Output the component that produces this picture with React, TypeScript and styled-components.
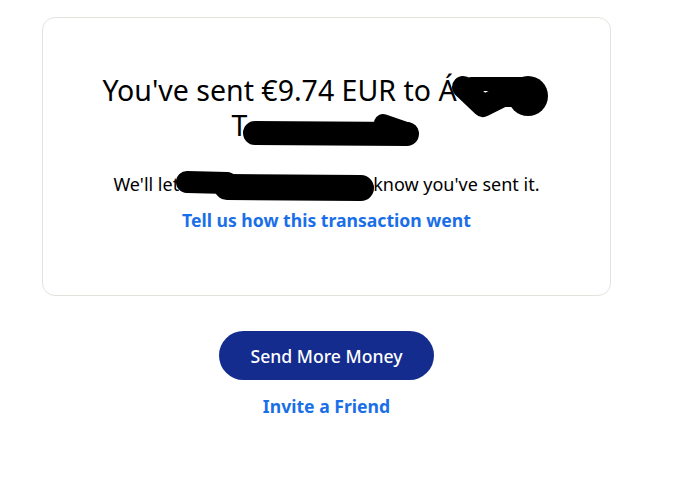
import styled, { createGlobalStyle } from "styled-components";

const GlobalStyle = createGlobalStyle`
    body {
        margin: 0;
        background: #ffffff;
        font-family: "Noto Sans", "Open Sans", sans-serif;
        color: #000000;
    }
`;

function App(){
    return(
        <>
            <GlobalStyle/>
            <Page>
                <Card>
                    <Title>
                        <span>You've sent €9.74 EUR to Á</span>
                        <Scribble width={100} height={42} $shift={4} $before={-6} $after={0}>
                            <path d="M12 11 L32 30 L52 20 L78 20" stroke="#000" strokeWidth="22" strokeLinecap="round" strokeLinejoin="round" fill="none"/>
                            <circle cx="77" cy="20" r="20" fill="#000"/>
                            <path d="M20 8 L70 8" stroke="#000" strokeWidth="14" strokeLinecap="round"/>
                        </Scribble>
                        <br/>
                        <span>T</span>
                        <Scribble width={178} height={36} $shift={2} $before={-4} $after={0}>
                            <path d="M12 21 L164 22" stroke="#000" strokeWidth="24" strokeLinecap="round" fill="none"/>
                            <path d="M140 11 L166 20" stroke="#000" strokeWidth="18" strokeLinecap="round" fill="none"/>
                        </Scribble>
                    </Title>
                    <Message>
                        <span>We'll let</span>
                        <Scribble width={200} height={32} $shift={0} $before={-4} $after={-2}>
                            <path d="M12 12 L52 13" stroke="#000" strokeWidth="22" strokeLinecap="round" fill="none"/>
                            <path d="M52 17 L186 18" stroke="#000" strokeWidth="26" strokeLinecap="round" fill="none"/>
                        </Scribble>
                        <span>know you've sent it.</span>
                    </Message>
                    <TextLink>Tell us how this transaction went</TextLink>
                </Card>
                <Actions>
                    <PrimaryButton>Send More Money</PrimaryButton>
                    <TextLink>Invite a Friend</TextLink>
                </Actions>
            </Page>
        </>
    );
}

export default App;

const Page = styled.div`
    display: flex;
    flex-direction: column;
    width: 569px;
    padding: 17px 0 0 42px;
`;

const Card = styled.div`
    display: flex;
    flex-direction: column;
    align-items: center;
    height: 279px;
    box-sizing: border-box;
    border: 1px solid #e3e3de;
    border-radius: 13px;
    padding-top: 55px;
`;

const Title = styled.h1`
    margin: 0;
    font-size: 28.5px;
    font-weight: 400;
    line-height: 35px;
    text-align: center;
    white-space: nowrap;
`;

const Scribble = styled.svg<{ $shift: number; $before: number; $after: number }>`
    display: inline-block;
    vertical-align: middle;
    margin: -10px ${(p) => p.$after}px -10px ${(p) => p.$before}px;
    transform: translateY(${(p) => p.$shift}px);
`;

const Message = styled.p`
    margin: 28px 0 0 0;
    font-size: 18px;
    line-height: 26px;
    text-align: center;
    white-space: nowrap;
`;

const TextLink = styled.a`
    margin-top: 11px;
    font-size: 17.6px;
    font-weight: 700;
    color: #1a6fe8;
    cursor: pointer;
`;

const Actions = styled.div`
    display: flex;
    flex-direction: column;
    align-items: center;
    padding-top: 35px;
    gap: 3px;
`;

const PrimaryButton = styled.button`
    height: 49px;
    padding: 0 32px;
    border: none;
    border-radius: 25px;
    background: #142c8e;
    color: #ffffff;
    font-family: "Noto Sans", "Open Sans", sans-serif;
    font-size: 17.6px;
    font-weight: 500;
`;
